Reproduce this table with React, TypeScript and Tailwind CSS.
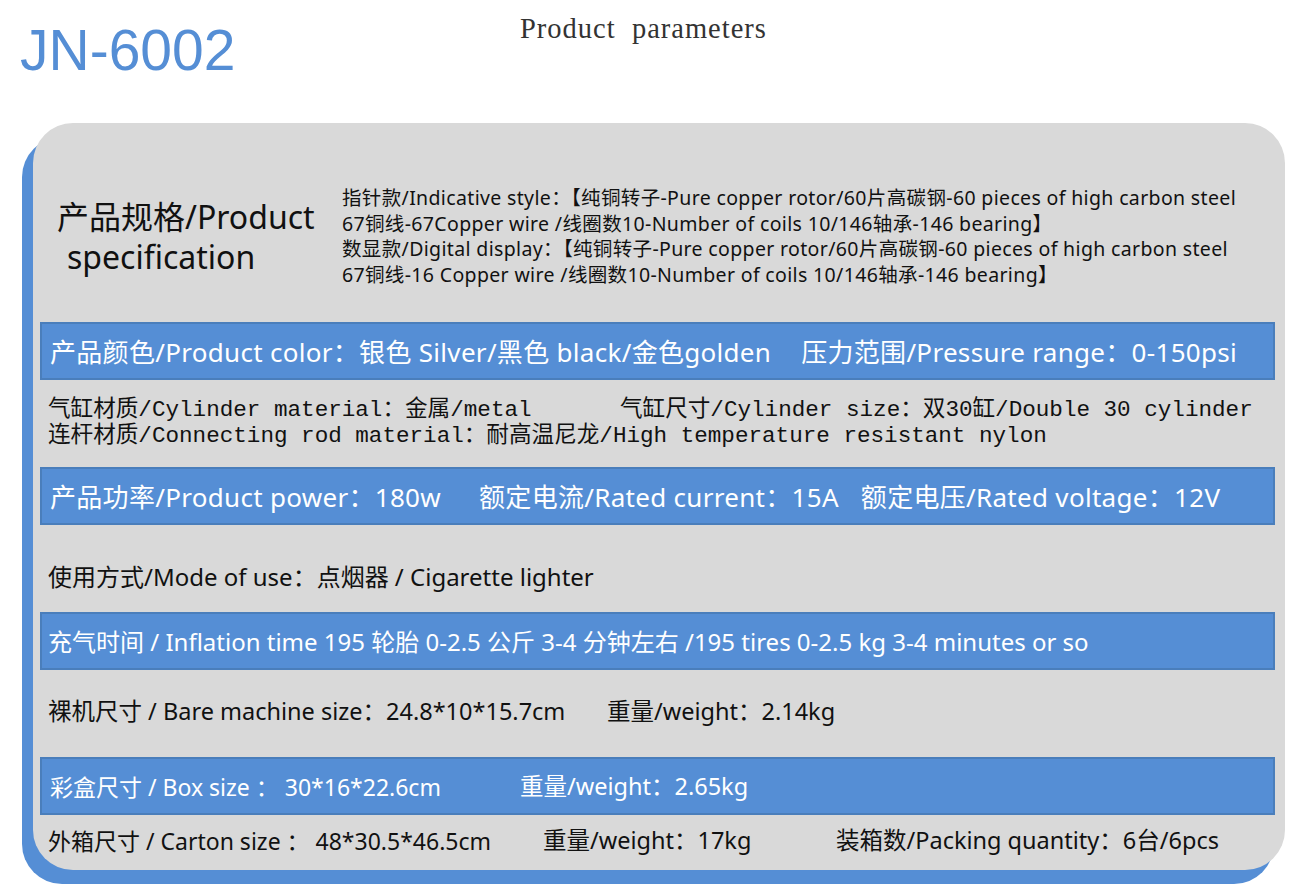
const sans = "font-['Noto_Sans','Noto_Sans_CJK_SC',sans-serif]";

function BlueBar({ children }: { children: React.ReactNode }) {
  return (
    <div className="ml-[7px] mr-[10px] flex h-[58px] items-center border-2 border-[#4a7ebb] bg-[#558ed5] pl-[6px] pt-[2px] text-[26px] tracking-[0.3px] text-white">
      {children}
    </div>
  );
}

export default function App() {
  return (
    <div className={`h-[894px] w-[1307px] overflow-hidden bg-white ${sans}`}>
      {/* Header */}
      <div className="flex h-[123px] items-start">
        <div className="w-[500px] pl-[20px] pt-[22px] font-['Liberation_Sans',sans-serif] text-[57px] leading-none text-[#558ed5]">
          JN-6002
        </div>
        <div className="ml-[20px] pt-[8px] font-['Liberation_Serif',serif] text-[28.5px] tracking-[1px] text-[#333]">
          Product&nbsp;&nbsp;parameters
        </div>
      </div>

      {/* Card */}
      <div className="ml-[33px] h-[747px] w-[1252px] rounded-[40px] bg-[#d9d9d9] text-black shadow-[-11px_14px_0_0_#558ed5]">
        {/* Specification */}
        <div className="flex h-[199px] items-start">
          <div className="w-[309px] pl-[24px] pt-[74px] text-[32px] leading-[40px] text-[#111]">
            <div>产品规格/Product</div>
            <div className="pl-[10px]">specification</div>
          </div>
          <div className="pt-[62px] text-[19.5px] leading-[25.5px] tracking-[0.35px] text-[#111]">
            <div>指针款/Indicative style：【纯铜转子-Pure copper rotor/60片高碳钢-60 pieces of high carbon steel</div>
            <div>67铜线-67Copper wire /线圈数10-Number of coils 10/146轴承-146 bearing】</div>
            <div>数显款/Digital display：【纯铜转子-Pure copper rotor/60片高碳钢-60 pieces of high carbon steel</div>
            <div>67铜线-16 Copper wire /线圈数10-Number of coils 10/146轴承-146 bearing】</div>
          </div>
        </div>

        <BlueBar>
          <span className="pl-[2px]">产品颜色/Product color：银色 Silver/黑色 black/金色golden</span>
          <span className="ml-[30px]">压力范围/Pressure range：0-150psi</span>
        </BlueBar>

        {/* Cylinder */}
        <div className="flex h-[87px] flex-col justify-center pb-[2px] pl-[15px] font-['Liberation_Mono','Noto_Sans_CJK_SC',monospace] text-[22.6px] leading-[26px] text-[#111]">
          <div className="flex">
            <span className="w-[572px]">气缸材质/Cylinder material：金属/metal</span>
            <span>气缸尺寸/Cylinder size：双30缸/Double 30 cylinder</span>
          </div>
          <div>连杆材质/Connecting rod material：耐高温尼龙/High temperature resistant nylon</div>
        </div>

        <BlueBar>
          <span className="pl-[2px]">产品功率/Product power：180w</span>
          <span className="ml-[38px]">额定电流/Rated current：15A</span>
          <span className="ml-[22px]">额定电压/Rated voltage：12V</span>
        </BlueBar>

        <div className="flex h-[87px] items-center pl-[15px] pt-[16px] text-[24px] text-[#111]">
          使用方式/Mode of use：点烟器 / Cigarette lighter
        </div>

        <BlueBar>
          <span className="text-[24px] tracking-normal">充气时间 / Inflation time 195 轮胎 0-2.5 公斤 3-4 分钟左右 /195 tires 0-2.5 kg 3-4 minutes or so</span>
        </BlueBar>

        <div className="flex h-[87px] items-center pb-[4px] pl-[15px] text-[23.5px] text-[#111]">
          <span className="w-[559px]">裸机尺寸 / Bare machine size：24.8*10*15.7cm</span>
          <span>重量/weight：2.14kg</span>
        </div>

        <BlueBar>
          <span className="w-[472px] pl-[2px] text-[23px] tracking-normal">彩盒尺寸 / Box size ： 30*16*22.6cm</span>
          <span className="text-[23.5px] tracking-normal">重量/weight：2.65kg</span>
        </BlueBar>

        <div className="flex h-[54px] items-center pb-[2px] pl-[15px] text-[23.5px] text-[#111]">
          <span className="w-[495px] text-[23px]">外箱尺寸 / Carton size ： 48*30.5*46.5cm</span>
          <span className="w-[293px]">重量/weight：17kg</span>
          <span>装箱数/Packing quantity：6台/6pcs</span>
        </div>
      </div>
    </div>
  );
}
